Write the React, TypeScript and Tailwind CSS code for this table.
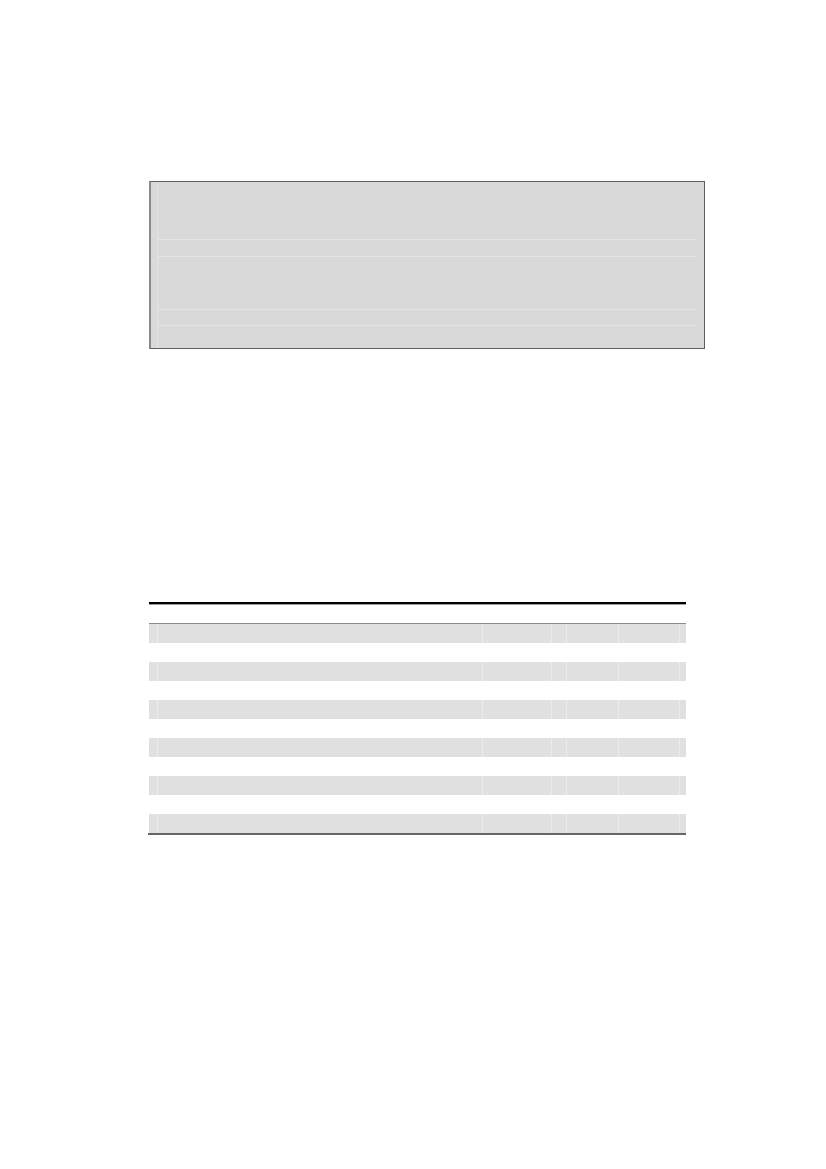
import React from "react"

// column widths of the shaded table rows, left to right (px)
const cols = ["w-[8px]", "w-[325px]", "w-[69px]", "w-[15px]", "w-[52px]", "w-[61px]", "w-[7px]"]

function ShadedRow() {
  return (
    <div className="flex h-[19px] bg-[#e0e0e0]">
      {cols.map((c, i) => (
        <div key={i} className={`${c} h-full ${i > 0 ? "border-l border-[#ebebeb]" : ""}`} />
      ))}
    </div>
  )
}

function PlainRow() {
  return <div className="h-[19px] bg-white" />
}

export default function App() {
  const rows = Array.from({ length: 11 }, (_, i) => i)

  return (
    <div className="min-h-screen w-[826px] h-[1169px] bg-white font-['Liberation_Sans',sans-serif]">
      <div className="pl-[149px] pt-[181px]">
        {/* Shaded box */}
        <div className="w-[556px] h-[168px] bg-[#d9d9d9] border border-[#5e5e5e] border-l-2 border-l-[#8a8a8a] flex">
          <div className="ml-[6px] mr-[7px] flex-1 border-l border-[#e3e3e3] flex flex-col">
            <div className="h-[58px] border-b border-[#e4e4e4]" />
            <div className="h-[17px] border-b border-[#e4e4e4]" />
            <div className="h-[53px] border-b border-[#e4e4e4]" />
            <div className="h-[16px] border-b border-[#e4e4e4]" />
            <div className="flex-1" />
          </div>
        </div>

        {/* Table */}
        <div className="mt-[253px] w-[537px]">
          <div className="h-[2px] bg-black" />
          <div className="h-px bg-[#9a9a9a]" />
          <div className="h-[18px] bg-white" />
          <div className="h-px bg-[#8c8c8c]" />
          <div className="flex flex-col">
            {rows.map((i) => (i % 2 === 0 ? <ShadedRow key={i} /> : <PlainRow key={i} />))}
          </div>
          <div className="h-[2px] bg-[#666666] -ml-px w-[538px]" />
        </div>
      </div>
    </div>
  )
}
